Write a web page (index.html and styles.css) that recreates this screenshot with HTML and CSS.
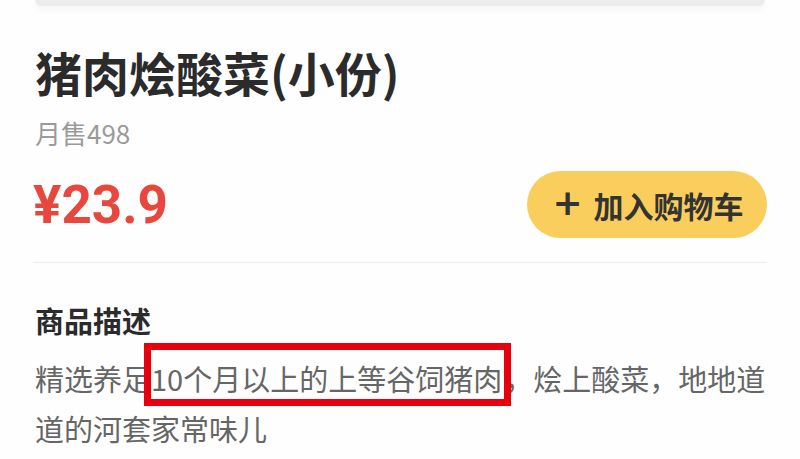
FILE: index.html
```html
<!DOCTYPE html>
<html lang="zh-CN">
<head>
<meta charset="utf-8">
<title>猪肉烩酸菜(小份)</title>
<link rel="stylesheet" href="styles.css">
</head>
<body>
<div class="page">
  <div class="prev-card"></div>
  <div class="content">
    <h1 class="title">猪肉烩酸菜(小份)</h1>
    <div class="sales">月售498</div>
    <div class="price-row">
      <div class="price">¥23.9</div>
      <button class="cart-btn"><span class="plus">+</span>加入购物车</button>
    </div>
    <div class="divider"></div>
    <h2 class="desc-title">商品描述</h2>
    <p class="desc">精选养足<span class="mark">10个月以上的上等谷饲猪肉</span>，烩上酸菜，地地道道的河套家常味儿</p>
  </div>
</div>
</body>
</html>
```
FILE: styles.css
```css
html, body {
  margin: 0;
  padding: 0;
  background: #ffffff;
}
.page {
  width: 800px;
  height: 459px;
  overflow: hidden;
  font-family: "Noto Sans CJK SC", "Noto Sans", sans-serif;
  background: #fefefe;
}
.prev-card {
  margin: 0 35px;
  height: 6px;
  background: #ececec;
  border-radius: 0 0 10px 10px;
  box-shadow: 0 3px 8px rgba(0, 0, 0, 0.05);
}
.content {
  padding: 0 35px;
  display: flex;
  flex-direction: column;
}
.title {
  margin: 38px 0 0;
  font-size: 47px;
  line-height: 56px;
  font-weight: 700;
  color: #2b2b2b;
}
.sales {
  margin-top: 18px;
  font-size: 26px;
  line-height: 30px;
  color: #9a9a9a;
}
.price-row {
  margin-top: 23px;
  display: flex;
  align-items: center;
  justify-content: space-between;
}
.price {
  font-family: Roboto, "Liberation Sans", sans-serif;
  font-weight: 700;
  font-size: 53px;
  line-height: 60px;
  color: #e8473e;
  margin-left: -2px;
}
.cart-btn {
  width: 240px;
  height: 67px;
  border: none;
  border-radius: 34px;
  background: #f9ce5d;
  color: #333333;
  font-family: "Noto Sans CJK SC", sans-serif;
  font-weight: 700;
  font-size: 30px;
  display: flex;
  align-items: center;
  justify-content: center;
  gap: 11px;
  padding: 0 0 0 2px;
  margin-right: -2px;
}
.plus {
  font-family: "DejaVu Sans", sans-serif;
  font-size: 36px;
  font-weight: 700;
  line-height: 1;
  margin-top: -3px;
}
.divider {
  margin: 24px -2px 0;
  height: 1px;
  background: #ededed;
}
.desc-title {
  margin: 37px 0 0;
  font-size: 29px;
  line-height: 40px;
  font-weight: 700;
  color: #2b2b2b;
}
.desc {
  margin: 13px 0 0;
  font-size: 29px;
  line-height: 50px;
  color: #666666;
  width: 732px;
}
.mark {
  outline: 7px solid #e8000d;
  padding: 7px 2px 0 0;
}
```
